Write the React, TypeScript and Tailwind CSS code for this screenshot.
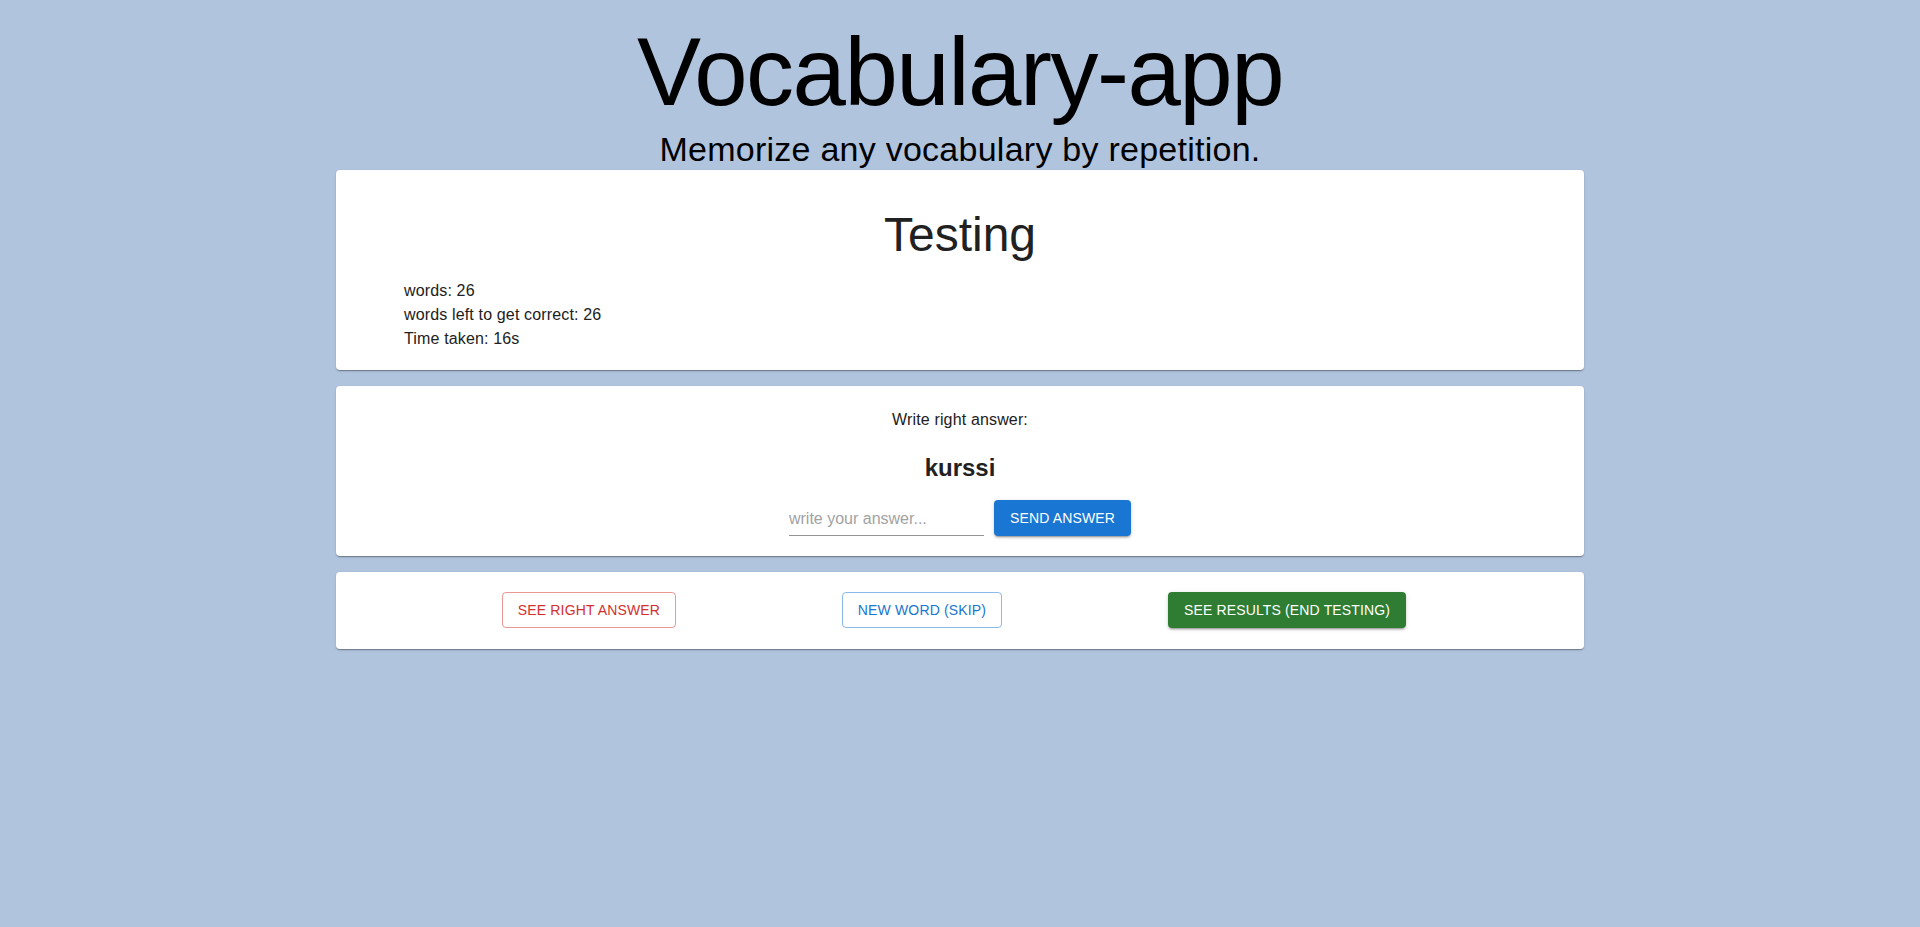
import { useState } from 'react'

const font = "font-['Liberation_Sans',Arial,sans-serif]"

const paper =
  'rounded-[4px] bg-white shadow-[0_2px_1px_-1px_rgba(0,0,0,0.2),0_1px_1px_0_rgba(0,0,0,0.14),0_1px_3px_0_rgba(0,0,0,0.12)]'

const btnBase =
  'inline-flex items-center justify-center h-[36px] rounded-[4px] text-[14px] leading-[24px] uppercase tracking-[0.15px] whitespace-nowrap'

const contained =
  'px-4 text-white shadow-[0_3px_1px_-2px_rgba(0,0,0,0.2),0_2px_2px_0_rgba(0,0,0,0.14),0_1px_5px_0_rgba(0,0,0,0.12)]'

export default function App() {
  const [answer, setAnswer] = useState('')

  return (
    <div className={`min-h-[927px] bg-[#b0c4de] ${font} pb-10`}>
      <header className="pt-4 text-center text-black">
        <h1 className="text-[96px] leading-[112px] font-light tracking-[-1.5px]">
          Vocabulary-app
        </h1>
        <h4 className="text-[34px] leading-[42px] tracking-[0.25px]">
          Memorize any vocabulary by repetition.
        </h4>
      </header>

      <main className="mx-auto w-[1248px] space-y-4">
        {/* stats */}
        <section className={`${paper} pt-[37px] pb-[19px] text-[#212121]`}>
          <h3 className="text-center text-[48px] leading-[56px]">Testing</h3>
          <div className="mt-4 pl-[68px] text-[16px] leading-[24px] tracking-[0.15px]">
            <p>words: 26</p>
            <p>words left to get correct: 26</p>
            <p>Time taken: 16s</p>
          </div>
        </section>

        {/* question */}
        <section className={`${paper} pt-[22px] pb-5 text-center text-[#212121]`}>
          <p className="text-[16px] leading-[24px] tracking-[0.15px]">Write right answer:</p>
          <h5 className="mt-5 text-[24px] leading-[32px] font-bold">kurssi</h5>
          <form
            className="mt-4 flex items-end justify-center gap-[10px]"
            onSubmit={(e) => e.preventDefault()}
          >
            <input
              value={answer}
              onChange={(e) => setAnswer(e.target.value)}
              placeholder="write your answer..."
              className="w-[195px] border-b border-[#949494] bg-transparent pt-1 pb-[5px] text-[16px] leading-[23px] text-[#212121] outline-none placeholder:text-[#a2a2a2]"
            />
            <button type="submit" className={`${btnBase} ${contained} bg-[#1976d2]`}>
              Send answer
            </button>
          </form>
        </section>

        {/* actions */}
        <section className={`${paper} flex justify-evenly pt-5 pb-[21px] pr-3`}>
          <button className={`${btnBase} border border-[rgba(211,47,47,0.5)] px-[15px] text-[#d32f2f]`}>
            See right answer
          </button>
          <button className={`${btnBase} border border-[rgba(25,118,210,0.5)] px-[15px] text-[#1976d2]`}>
            New word (skip)
          </button>
          <button className={`${btnBase} ${contained} bg-[#2e7d32]`}>
            See results (end testing)
          </button>
        </section>
      </main>
    </div>
  )
}
